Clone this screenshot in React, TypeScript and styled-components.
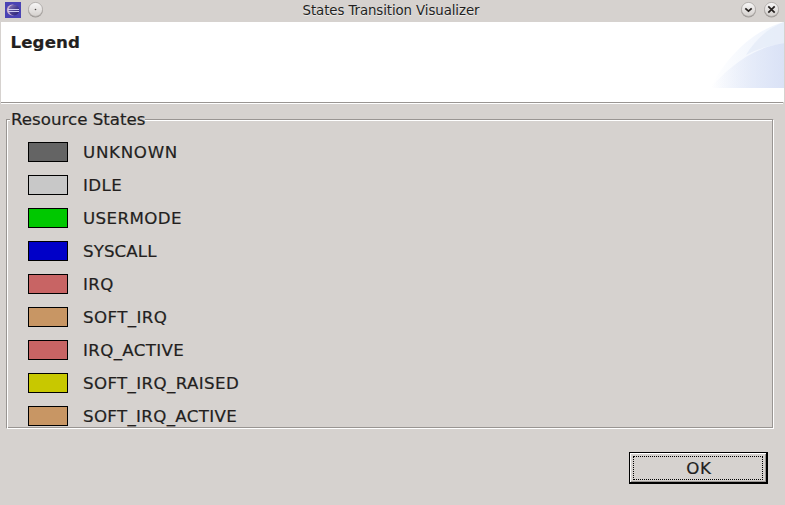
import React from "react";
import styled, { createGlobalStyle } from "styled-components";

const GlobalStyle = createGlobalStyle`
  * { box-sizing: border-box; }
  body { margin: 0; background: #d6d2cf; }
`;

const Dialog = styled.div`
  width: 785px;
  height: 505px;
  display: flex;
  flex-direction: column;
  overflow: hidden;
  background: #d6d2cf;
  color: #231f1e;
  font: 16.67px/20px "DejaVu Sans", sans-serif;
  -webkit-text-stroke: 0.2px #231f1e;
`;

const TitleBar = styled.header`
  height: 22px;
  flex: none;
  display: flex;
  align-items: flex-start;
  justify-content: space-between;
  padding: 0 5px 0 4px;
`;

const TitleText = styled.h1`
  margin: 2px 0 0;
  padding-right: 2px;
  font-size: 13.33px;
  line-height: 17px;
  font-weight: 400;
  letter-spacing: -0.09px;
  white-space: nowrap;
  text-shadow: 0 1px 0 #eceae8;
  -webkit-text-stroke: 0;
`;

const TitleGroup = styled.div<{ $gap: number }>`
  display: flex;
  gap: ${(p) => p.$gap}px;
  svg { display: block; }
`;

const Banner = styled.section`
  flex: none;
  height: 80px;
  margin: 0 1px;
  display: flex;
  justify-content: space-between;
  background: #fff;
`;

const BannerTitle = styled.h2`
  margin: 10px 0 0 9.5px;
  font-size: 16.67px;
  line-height: 21px;
  font-weight: 700;
  letter-spacing: 0.1px;
`;

const Separator = styled.div`
  flex: none;
  height: 2px;
  margin: 0 2px 0 1px;
  border-top: 1px solid #999592;
  border-bottom: 1px solid #fff;
`;

const Group = styled.section`
  flex: none;
  width: 768px;
  height: 320px;
  margin: 5px 0 0 6px;
  display: grid;
  grid-template-rows: 20px 300px;
`;

const GroupHeading = styled.div`
  display: flex;
  height: 20px;
`;

const LeadingRule = styled.span`
  width: 4px;
  flex: none;
  height: 10px;
  margin-top: 10px;
  border-top: 1px solid #999592;
  border-left: 1px solid #999592;
  box-shadow: inset 1px 1px #fff;
`;

const TrailingRule = styled.span`
  flex: 1;
  height: 10px;
  margin-top: 10px;
  border-top: 1px solid #999592;
  border-right: 1px solid #fff;
  box-shadow: inset -1px 0 #999592, inset 0 1px #fff;
`;

const GroupTitle = styled.h3`
  width: 135px;
  flex: none;
  margin: 0;
  padding-left: 1px;
  font-size: inherit;
  font-weight: 400;
  line-height: 21px;
  white-space: nowrap;
`;

const StateList = styled.ul`
  list-style: none;
  margin: 0;
  height: 300px;
  padding: 13px 0 0 21px;
  display: flex;
  flex-direction: column;
  gap: 13px;
  border-left: 1px solid #999592;
  border-right: 1px solid #fff;
  border-bottom: 1px solid #fff;
  box-shadow: inset 1px 0 #fff, inset -1px -1px #999592;
`;

const StateRow = styled.li`
  display: flex;
  flex: none;
  height: 20px;
  gap: 15px;
  white-space: nowrap;
`;

const Swatch = styled.span<{ $color: string }>`
  width: 40px;
  height: 20px;
  border: 1px solid #000;
  background: ${(p) => p.$color};
`;

const StateName = styled.span<{ $tracking: number }>`
  line-height: 21px;
  letter-spacing: ${(p) => p.$tracking}px;
`;

const Actions = styled.footer`
  display: flex;
  justify-content: flex-end;
  padding: 23px 17px 0 0;
`;

const OkButton = styled.button`
  width: 139px;
  height: 32px;
  padding: 2px;
  border: solid #000;
  border-width: 1px 2px 2px 1px;
  border-radius: 0;
  background: #d6d2cf;
  box-shadow: inset 1px 1px #fff, inset -1px -1px #999592;
  color: inherit;
  font: inherit;
  letter-spacing: 0.7px;
  display: flex;
`;

const FocusRing = styled.span`
  flex: 1;
  height: 24px;
  margin: 1px 1px 0;
  padding-left: 2px;
  border: 1px dotted #000;
  line-height: 23px;
  text-align: center;
`;

const states = [
  { name: "UNKNOWN", color: "#646464", tracking: 0.7 },
  { name: "IDLE", color: "#c8c8c8", tracking: 0.4 },
  { name: "USERMODE", color: "#00c800", tracking: 0.4 },
  { name: "SYSCALL", color: "#0000c8", tracking: 0.1 },
  { name: "IRQ", color: "#c86464", tracking: 0.4 },
  { name: "SOFT_IRQ", color: "#c89664", tracking: 0.4 },
  { name: "IRQ_ACTIVE", color: "#c86464", tracking: 0.35 },
  { name: "SOFT_IRQ_RAISED", color: "#c8c800", tracking: 0.37 },
  { name: "SOFT_IRQ_ACTIVE", color: "#c89664", tracking: 0.33 },
];

function EclipseIcon() {
  return (
    <svg width="18" height="20" viewBox="0 0 18 20">
      <defs>
        <linearGradient id="eclipse" x1="0" y1="0" x2="1" y2="1">
          <stop offset="0" stopColor="#8f7fbd" />
          <stop offset=".5" stopColor="#4b4192" />
          <stop offset="1" stopColor="#2b2170" />
        </linearGradient>
      </defs>
      <rect x="1" y="2" width="16" height="16" fill="#4a43b4" />
      <circle cx="8.2" cy="10" r="5.4" fill="#cbb0cc" />
      <circle cx="10" cy="10" r="5.3" fill="url(#eclipse)" />
      <path d="M4 9.5H15M4 11.5H15" stroke="#cfcdf0" strokeWidth="1" />
    </svg>
  );
}

function RoundButton({ kind }: { kind: "dot" | "down" | "close" }) {
  return (
    <svg width="17" height="20" viewBox="0 0 17 20">
      <defs>
        <linearGradient id={`face-${kind}`} x1="0" y1="0" x2="0" y2="1">
          <stop offset="0" stopColor="#f8f7f7" />
          <stop offset="1" stopColor="#d4d0cd" />
        </linearGradient>
      </defs>
      <circle cx="8.5" cy="10" r="7.4" fill="#9d9996" />
      <circle cx="8.5" cy="9.4" r="7" fill={`url(#face-${kind})`} stroke="#aaa6a3" strokeWidth=".7" />
      {kind === "dot" && <circle cx="8.5" cy="9.5" r=".8" fill="#4b4744" />}
      {kind === "down" && <path d="M5.3 8.3L8.5 11.2L11.7 8.3" fill="none" stroke="#25211f" strokeWidth="1.7" />}
      {kind === "close" && <path d="M5.3 6.3L11.7 12.7M11.7 6.3L5.3 12.7" stroke="#25211f" strokeWidth="1.7" />}
    </svg>
  );
}

function BannerArt() {
  return (
    <svg width="75" height="66" viewBox="0 0 75 66">
      <defs>
        <linearGradient id="sweep" gradientUnits="userSpaceOnUse" x1="2" y1="0" x2="75" y2="0">
          <stop offset="0" stopColor="#eef3fc" stopOpacity="0" />
          <stop offset=".5" stopColor="#eef3fc" stopOpacity=".6" />
          <stop offset="1" stopColor="#eef3fc" />
        </linearGradient>
        <linearGradient id="swell" gradientUnits="userSpaceOnUse" x1="2" y1="0" x2="75" y2="0">
          <stop offset="0" stopColor="#dae2f6" stopOpacity="0" />
          <stop offset=".5" stopColor="#dae2f6" stopOpacity=".5" />
          <stop offset="1" stopColor="#dae2f6" />
        </linearGradient>
      </defs>
      <path d="M1 66C14 42 38 10 75 0V66Z" fill="url(#sweep)" />
      <path d="M37 33C45 20 57 7 75 0V22Q55 23 37 33Z" fill="#e2e9f8" opacity=".65" />
      <path d="M1 66C17 49 39 26 75 21.3V66Z" fill="url(#swell)" />
    </svg>
  );
}

export default function App() {
  return (
    <Dialog>
      <GlobalStyle />
      <TitleBar>
        <TitleGroup $gap={5}>
          <EclipseIcon />
          <RoundButton kind="dot" />
        </TitleGroup>
        <TitleText>States Transition Visualizer</TitleText>
        <TitleGroup $gap={6}>
          <RoundButton kind="down" />
          <RoundButton kind="close" />
        </TitleGroup>
      </TitleBar>
      <Banner>
        <BannerTitle>Legend</BannerTitle>
        <BannerArt />
      </Banner>
      <Separator />
      <Group>
        <GroupHeading>
          <LeadingRule />
          <GroupTitle>Resource States</GroupTitle>
          <TrailingRule />
        </GroupHeading>
        <StateList>
          {states.map(({ name, color, tracking }) => (
            <StateRow key={name}>
              <Swatch $color={color} />
              <StateName $tracking={tracking}>{name}</StateName>
            </StateRow>
          ))}
        </StateList>
      </Group>
      <Actions>
        <OkButton>
          <FocusRing>OK</FocusRing>
        </OkButton>
      </Actions>
    </Dialog>
  );
}
